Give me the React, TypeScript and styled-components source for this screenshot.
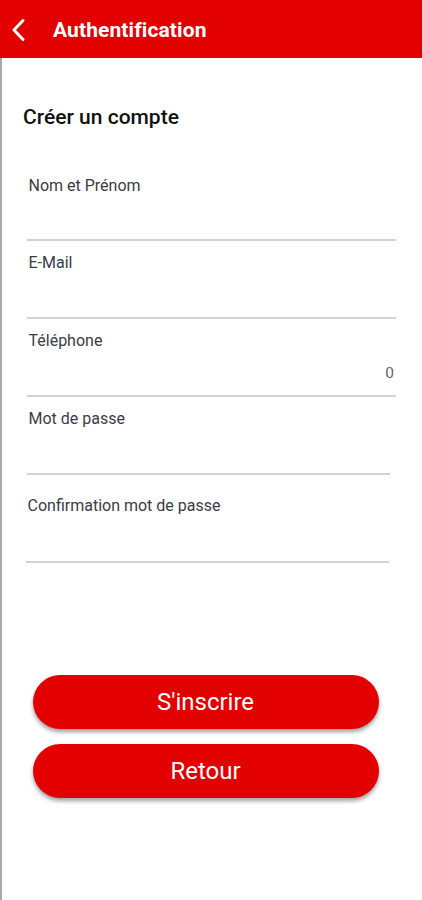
import React from "react";
import styled, { createGlobalStyle } from "styled-components";

const Global = createGlobalStyle`
  html, body { margin: 0; padding: 0; background: #ffffff; }
  body { font-family: Roboto, "Liberation Sans", Arial, sans-serif; }
  * { box-sizing: border-box; }
`;

const Screen = styled.div`
  width: 422px;
  height: 900px;
  display: flex;
  flex-direction: column;
  background: #ffffff;
  overflow: hidden;
`;

const Header = styled.header`
  height: 58px;
  flex: none;
  background: #e30000;
  display: flex;
  align-items: center;
  padding: 2px 0 0 11px;
  gap: 26px;
`;

const BackButton = styled.button`
  width: 16px;
  height: 24px;
  border: none;
  background: transparent;
  padding: 0;
  display: flex;
  align-items: center;
  justify-content: center;
  cursor: pointer;
`;

const Title = styled.h1`
  margin: 0;
  color: #ffffff;
  font-size: 21px;
  font-weight: 700;
  letter-spacing: 0.1px;
`;

const Body = styled.main`
  flex: 1;
  border-left: 2.5px solid #a9a9a9;
  padding: 46px 0 0 0;
  display: flex;
  flex-direction: column;
`;

const SectionTitle = styled.h2`
  margin: 0 0 45px 21px;
  font-size: 21px;
  line-height: 26px;
  font-weight: 500;
  color: #111111;
`;

const Form = styled.form`
  display: flex;
  flex-direction: column;
  gap: 11px;
`;

const Field = styled.label<{ $right: number; $extraTop?: number; $left?: number }>`
  display: flex;
  flex-direction: column;
  margin-left: ${(p) => p.$left ?? 24.5}px;
  margin-right: ${(p) => p.$right}px;
  margin-top: ${(p) => p.$extraTop ?? 0}px;
  border-bottom: 2px solid #d2d2d2;
`;

const Label = styled.span`
  font-size: 16px;
  line-height: 20px;
  padding: 1px 0 0 2px;
  margin-bottom: -1px;
  color: #3b3b45;
`;

const Input = styled.input<{ $h: number }>`
  height: ${(p) => p.$h}px;
  border: none;
  outline: none;
  background: transparent;
  padding: 0 2px 0 2px;
  font-family: Roboto, "Liberation Sans", Arial, sans-serif;
  font-size: 15.5px;
  color: #555;
  text-align: right;
  &::placeholder { color: #666; }
`;

const Actions = styled.div`
  margin: 112px 0 0 30.5px;
  width: 346px;
  display: flex;
  flex-direction: column;
  gap: 15px;
`;

const PillButton = styled.button`
  height: 54px;
  border: none;
  border-radius: 27px;
  background: #e30000;
  color: #ffffff;
  font-family: Roboto, "Liberation Sans", Arial, sans-serif;
  font-size: 24px;
  font-weight: 400;
  box-shadow: 0 3px 4px rgba(0, 0, 0, 0.38);
  cursor: pointer;
`;

export default function App() {
  return (
    <>
      <Global />
      <Screen>
        <Header>
          <BackButton aria-label="Retour">
            <svg width="16" height="24" viewBox="0 0 16 24">
              <polyline points="12,2.5 3,12 12,21.5" fill="none" stroke="#fff" strokeWidth="3" strokeLinecap="round" strokeLinejoin="round" />
            </svg>
          </BackButton>
          <Title>Authentification</Title>
        </Header>
        <Body>
          <SectionTitle>Créer un compte</SectionTitle>
          <Form onSubmit={(e) => e.preventDefault()}>
            <Field $right={26}>
              <Label>Nom et Prénom</Label>
              <Input $h={44} type="text" />
            </Field>
            <Field $right={26}>
              <Label>E-Mail</Label>
              <Input $h={45} type="email" />
            </Field>
            <Field $right={26}>
              <Label>Téléphone</Label>
              <Input $h={45} type="tel" placeholder="0" />
            </Field>
            <Field $right={32}>
              <Label>Mot de passe</Label>
              <Input $h={45} type="password" />
            </Field>
            <Field $right={33} $extraTop={9} $left={23.5}>
              <Label>Confirmation mot de passe</Label>
              <Input $h={46} type="password" />
            </Field>
          </Form>
          <Actions>
            <PillButton type="button">S'inscrire</PillButton>
            <PillButton type="button">Retour</PillButton>
          </Actions>
        </Body>
      </Screen>
    </>
  );
}
